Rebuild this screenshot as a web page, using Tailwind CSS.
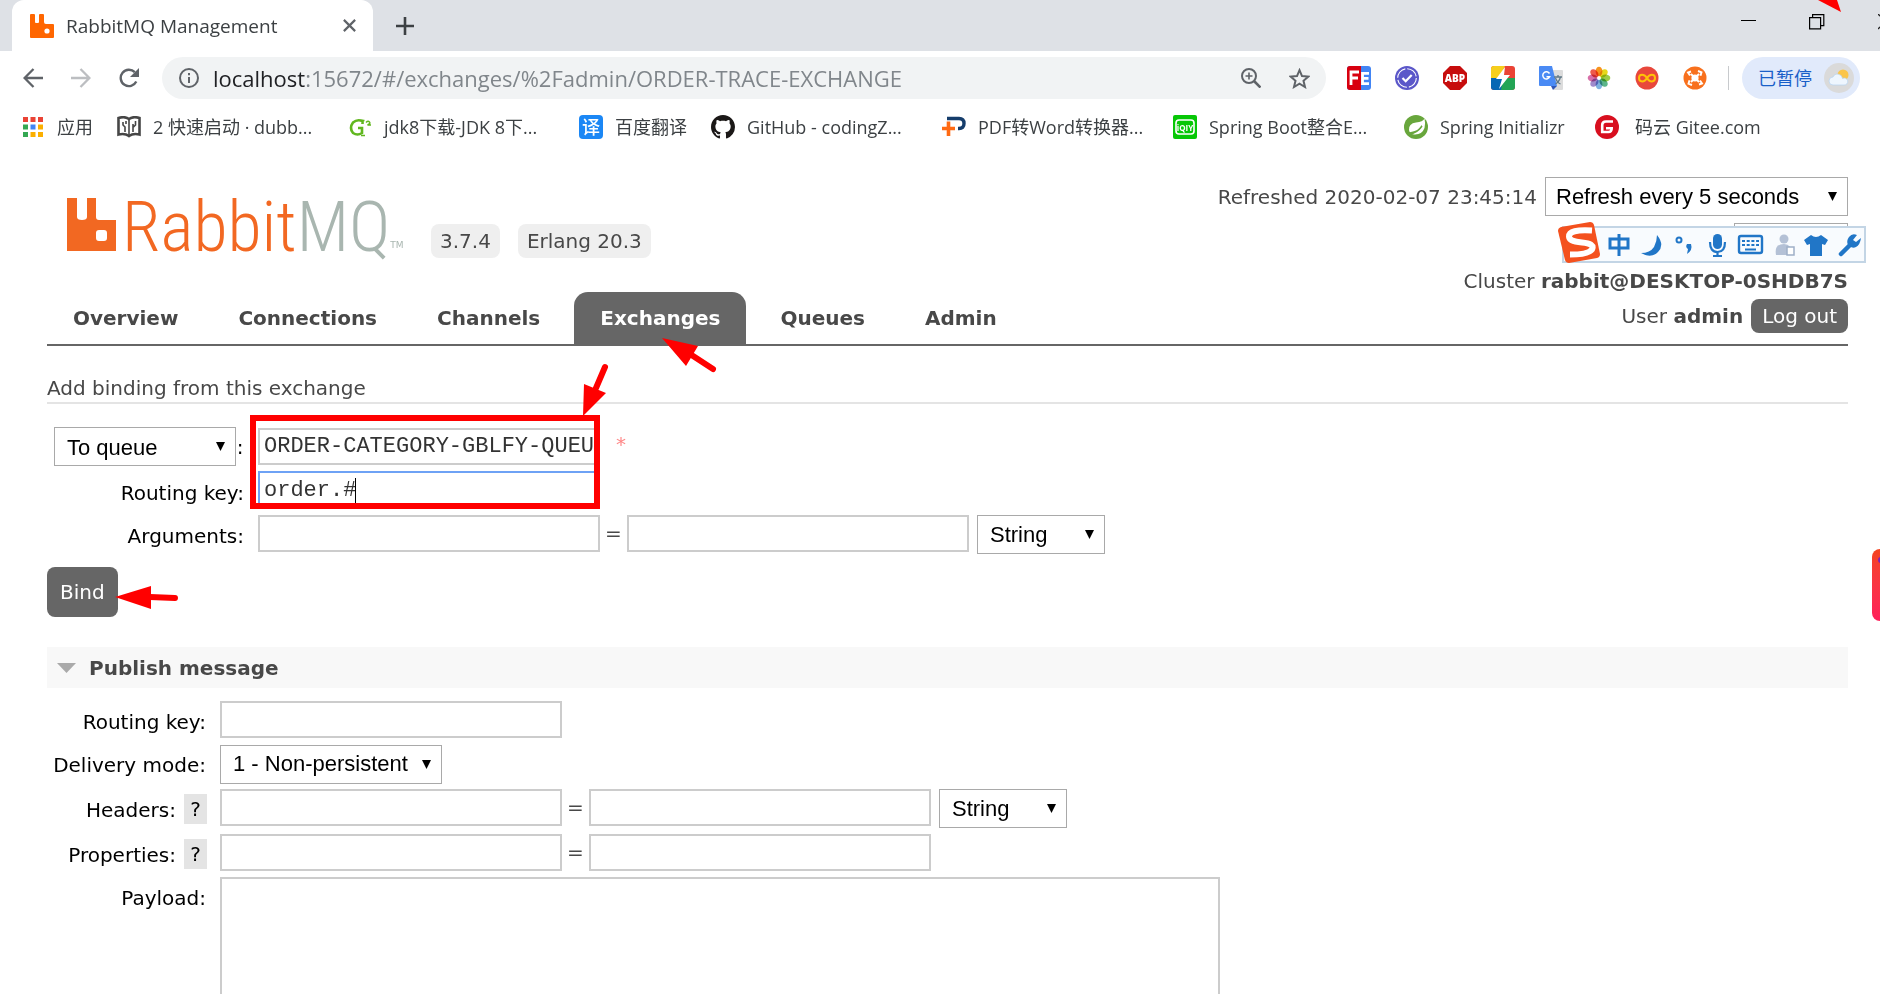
<!DOCTYPE html>
<html lang="zh-CN">
<head>
<meta charset="utf-8">
<title>RabbitMQ Management</title>
<script src="https://cdn.jsdelivr.net/npm/@tailwindcss/browser@4"></script>
</head>
<body class="relative h-screen overflow-hidden bg-white font-['DejaVu_Sans',sans-serif] text-[20px] leading-6 text-[#484848]">

<!-- Browser chrome -->
<header class="font-['Open_Sans','Noto_Sans_CJK_SC',sans-serif] text-[#3c4043]">
  <div class="flex h-[51px] items-stretch bg-[#dee1e6] pl-3">
    <div class="flex w-[361px] items-center gap-3 rounded-t-xl bg-white pr-3.5 pl-[18px]">
      <svg class="size-6" viewBox="0 0 24 24"><path fill="#ff6600" d="M1 0h3q1 0 1 1v7q0 1 1 1h2q1 0 1-1V1q0-1 1-1h3q1 0 1 1v7q0 2 2 2h7q1 0 1 1v12q0 1-1 1H1q-1 0-1-1V1q0-1 1-1z"/><circle cx="17" cy="17" r="2.600" fill="#fff"/></svg>
      <span class="flex-1 whitespace-nowrap text-[19px]">RabbitMQ Management</span>
      <button aria-label="Close tab" class="grid size-5 place-items-center"><svg class="size-[13px]" viewBox="0 0 12 12" stroke="#5f6368" stroke-width="2"><path d="M.8.8l10.400 10.400M11.200.8L.8 11.200"/></svg></button>
    </div>
    <button aria-label="New tab" class="ml-[23px] grid w-[18px] place-items-center"><svg class="size-[18px]" viewBox="0 0 18 18" stroke="#3c4043" stroke-width="2.600"><path d="M9 0v18M0 9h18"/></svg></button>
    <div class="ml-auto flex shrink-0 items-start pt-3.5">
      <button aria-label="Minimize" class="mr-[53px]"><svg class="h-4 w-[15px]" viewBox="0 0 15 16"><path d="M0 6h15v1H0z" fill="#000"/></svg></button>
      <button aria-label="Restore" class="mr-[53px]"><svg class="size-4" viewBox="0 0 16 16" fill="none" stroke="#000" stroke-width="1.200"><path d="M.6 3.600h11v11.200H.6zM3.600 3.600V.6h11.200v11h-3"/></svg></button>
      <button aria-label="Close" class="w-0.5 overflow-hidden"><svg class="size-4" viewBox="0 0 16 16" stroke="#222" stroke-width="1.400"><path d="M0 0l16 15M16 0L0 15"/></svg></button>
    </div>
  </div>

  <div class="flex h-[54px] items-center pr-5 pl-[23px]">
    <button aria-label="Back" class="mr-7"><svg class="size-5" viewBox="0 0 20 20" fill="none" stroke="#5f6368" stroke-width="2.300"><path d="M20 10H2M10.500 1L1.600 10l8.900 9"/></svg></button>
    <button aria-label="Forward" class="mr-7"><svg class="size-5" viewBox="0 0 20 20" fill="none" stroke="#bcbec1" stroke-width="2.300"><path d="M0 10h18M9.500 1l8.900 9-8.900 9"/></svg></button>
    <button aria-label="Reload" class="mr-[23px]"><svg class="size-5" viewBox="0 0 20 20"><path d="M17.300 13.500a8.200 8.200 0 1 1-1.500-9.300" fill="none" stroke="#5f6368" stroke-width="2.400"/><path d="M20 0v9h-9z" fill="#5f6368"/></svg></button>
    <div class="flex h-[42px] flex-1 items-center rounded-full bg-[#f1f3f4] pr-4 pl-[17px]">
      <svg class="size-5 shrink-0" viewBox="0 0 20 20"><circle cx="10" cy="10" r="9" fill="none" stroke="#5f6368" stroke-width="2"/><path d="M9 9h2v6H9zM9 5h2v2.200H9z" fill="#5f6368"/></svg>
      <span class="ml-3.5 flex-1 whitespace-nowrap text-[22px] text-[#80868b]"><span class="text-[#202124]">localhost</span>:15672/#/exchanges/%2Fadmin/ORDER-TRACE-EXCHANGE</span>
      <button aria-label="Zoom" class="mr-7"><svg class="size-5" viewBox="0 0 20 20" fill="none" stroke="#5f6368" stroke-width="2"><circle cx="8" cy="8" r="7"/><path d="M13 13l6.500 6.500" stroke-width="2.600"/><path d="M8 4.500v7M4.500 8h7" stroke-width="1.600"/></svg></button>
      <button aria-label="Bookmark"><svg class="size-[21px]" viewBox="0 0 21 21" fill="none" stroke="#5f6368" stroke-width="2"><path d="M10.500 2.200l2.500 5.900 6.300.5-4.800 4.200 1.500 6.200-5.500-3.300L5 19l1.500-6.200-4.800-4.200 6.300-.5z"/></svg></button>
    </div>
    <div class="flex items-center gap-6 pl-[21px]">
      <button aria-label="FE Helper"><svg class="size-6" viewBox="0 0 24 24"><rect width="24" height="24" rx="3" fill="#4285f4"/><path d="M3 0h11v24H3q-3 0-3-3V3q0-3 3-3z" fill="#d8000f"/><path d="M4 19V6h8M4 12h7M22 7.300h-6.500v10.400H22M16 12.400h5.500" fill="none" stroke="#fff" stroke-width="2.800"/></svg></button>
      <button aria-label="Check"><svg class="size-6" viewBox="0 0 24 24" fill="none"><circle cx="12" cy="12" r="12" fill="#5b57c9"/><circle cx="12" cy="12" r="9.300" stroke="#fff" stroke-width="1.100" stroke-dasharray="12.600 2"/><path d="M7.500 12l3.200 3.200 6-6.200" stroke="#fff" stroke-width="2.200"/></svg></button>
      <button aria-label="AdBlock Plus"><svg class="size-6" viewBox="0 0 24 24"><path d="M7 0h10l7 7v10l-7 7H7l-7-7V7z" fill="#c70d0d"/><text x="12" y="16" text-anchor="middle" font-family="Open Sans" font-weight="800" font-size="10" fill="#fff">ABP</text></svg></button>
      <button aria-label="Speed"><svg class="size-6" viewBox="0 0 24 24"><rect width="24" height="24" rx="3" fill="#ea4335"/><path d="M3 0h11L8 13H0V3q0-3 3-3z" fill="#f6cf1c"/><path d="M0 12h12v12H3q-3 0-3-3z" fill="#0868b4"/><path d="M12 12h12v9q0 3-3 3H10z" fill="#23a455"/><path d="M14 1L5 13h6L8 23l11-14h-6z" fill="#fff"/></svg></button>
      <button aria-label="Translate"><svg class="size-6" viewBox="0 0 24 24"><path d="M9 4h14q1 0 1 1v18q0 1-1 1h-8z" fill="#dcdcdc"/><path d="M1 0h12l5 20H1q-1 0-1-1V1q0-1 1-1z" fill="#4a8af4"/><path d="M12 20h6l-4 4z" fill="#2f56b5"/><path d="M10.500 7.500a3.600 3.600 0 1 0 .2 3.300H7.500" fill="none" stroke="#fff" stroke-width="1.500"/><path d="M15 11h8M19 9v2M21.500 11q-1.500 5-5 7M16.500 12q2 5 5 6" fill="none" stroke="#607988" stroke-width="1.300"/></svg></button>
      <button aria-label="Photos"><svg class="size-6" viewBox="0 0 24 24"><g transform="translate(12 12)" class="*:mix-blend-multiply"><ellipse cy="-6.500" rx="3.400" ry="4.800" fill="#f7931e"/><ellipse cy="-6.500" rx="3.400" ry="4.800" fill="#e6d81b" transform="rotate(45)"/><ellipse cy="-6.500" rx="3.400" ry="4.800" fill="#9ccc46" transform="rotate(90)"/><ellipse cy="-6.500" rx="3.400" ry="4.800" fill="#5cb58a" transform="rotate(135)"/><ellipse cy="-6.500" rx="3.400" ry="4.800" fill="#7fb2e0" transform="rotate(180)"/><ellipse cy="-6.500" rx="3.400" ry="4.800" fill="#a08bcb" transform="rotate(225)"/><ellipse cy="-6.500" rx="3.400" ry="4.800" fill="#d76fa8" transform="rotate(270)"/><ellipse cy="-6.500" rx="3.400" ry="4.800" fill="#ee5a4c" transform="rotate(315)"/></g></svg></button>
      <button aria-label="Infinity"><svg class="size-6" viewBox="0 0 24 24"><circle cx="12" cy="12" r="11.500" fill="#e8473c"/><path d="M12 12c-2.500-4.500-8-4.500-8 0s5.500 4.500 8 0 8-4.500 8 0-5.500 4.500-8 0z" fill="none" stroke="#ffc107" stroke-width="2"/></svg></button>
      <button aria-label="Crosshair"><svg class="size-6" viewBox="0 0 24 24"><circle cx="12" cy="12" r="11.500" fill="#f8701d"/><circle cx="12" cy="12" r="3.600" fill="#fff"/><path d="M7 9.500L5 6.500l3-1M15 5l3.500 1.300-1 3.500M17 14.500l2 3-3 1M9 19l-3.500-1.300 1-3.500M8 8l3 3M16 8l-3 3M16 16l-3-3M8 16l3-3" fill="none" stroke="#fff" stroke-width="1.900"/></svg></button>
    </div>
    <div class="mr-[13px] ml-[21px] h-6 w-px bg-[#c8cacd]"></div>
    <button class="flex h-[42px] w-[118px] items-center gap-3 rounded-full bg-[#e1eafb] pl-4 text-[18px] text-[#1a5fc8]">已暂停
      <svg class="size-[30px]" viewBox="0 0 30 30"><circle cx="15" cy="15" r="15" fill="#dadada"/><circle cx="19" cy="12" r="5.500" fill="#fbc54a"/><path d="M9 22a4 4 0 0 1 0-8 5 5 0 0 1 9.500 1.500A3.500 3.500 0 1 1 20 22z" fill="#eef6fe" stroke="#b5d3f0" stroke-width=".7"/></svg>
    </button>
  </div>

  <nav class="flex h-[43px] items-center pl-[23px] text-[18px] whitespace-nowrap">
    <a href="#" class="flex w-[94px] items-center gap-3.5"><svg class="size-5" viewBox="0 0 20 20"><path d="M0 0h5v5H0zM7.500 0h5v5h-5zM15 0h5v5h-5z" fill="#ea4335"/><path d="M0 7.500h5v5H0zM0 15h5v5H0z" fill="#34a853"/><path d="M7.500 7.500h5v5h-5z" fill="#4285f4"/><path d="M15 7.500h5v5h-5zM7.500 15h5v5h-5zM15 15h5v5h-5z" fill="#fbaf00"/></svg>应用</a>
    <a href="#" class="flex w-[232px] items-center gap-3"><svg class="h-[22px] w-6" viewBox="0 0 24 22" fill="none"><path d="M1.500 2Q8 0 12 3q4-3 10.500-1v16.500Q16 17 12 20q-4-3-10.500-1.500z" stroke="#464646" stroke-width="2.600"/><path d="M12 3v16M6 6v3l2 2v5M9 5v3M16 16V8M18.500 5v4l-2 2" stroke="#464646" stroke-width="1.600"/></svg>2 快速启动 · dubb...</a>
    <a href="#" class="flex w-[230px] items-center gap-3"><svg class="size-[23px]" viewBox="0 0 23 23" fill="none" stroke="#61b71f"><path d="M13.500 9V6Q8 4 4 7.500q-4 5.500 0 10.500 4.500 3 9 0v-5H9" stroke-width="2.600"/><path d="M12 20.500h4M11 5.500h4.500" stroke-width="1.600"/><path d="M17 7.500q2-2 3.500-.5t-2 3h3.500" stroke-width="1.400"/></svg>jdk8下载-JDK 8下...</a>
    <a href="#" class="flex w-[132px] items-center gap-3"><span class="grid size-6 place-items-center rounded bg-[#1b87f5] leading-6 font-medium text-white">译</span>百度翻译</a>
    <a href="#" class="flex w-[231px] items-center gap-3"><svg class="size-6" viewBox="0 0 16 16"><path fill="#1b1817" d="M8 0C3.580 0 0 3.580 0 8c0 3.540 2.290 6.530 5.470 7.590.4.070.55-.17.55-.38 0-.19-.01-.82-.01-1.490-2.010.37-2.530-.49-2.690-.94-.09-.23-.48-.94-.82-1.130-.28-.15-.68-.52-.01-.53.63-.01 1.080.58 1.230.82.72 1.210 1.870.87 2.330.66.07-.52.28-.87.51-1.070-1.780-.2-3.640-.89-3.640-3.950 0-.87.31-1.590.82-2.150-.08-.2-.36-1.020.08-2.120 0 0 .67-.21 2.200.82.64-.18 1.320-.27 2-.27s1.360.09 2 .27c1.530-1.040 2.200-.82 2.200-.82.44 1.100.16 1.920.08 2.120.51.56.82 1.270.82 2.150 0 3.070-1.870 3.750-3.650 3.950.29.25.54.73.54 1.480 0 1.070-.01 1.930-.01 2.200 0 .21.15.46.55.38A8.010 8.010 0 0 0 16 8c0-4.420-3.580-8-8-8z"/></svg>GitHub - codingZ...</a>
    <a href="#" class="flex w-[231px] items-center gap-3"><svg class="size-6" viewBox="0 0 24 24" fill="none"><path d="M5 3.500h12q5 0 5 5t-5 5h-1" stroke="#153d6b" stroke-width="3.400"/><path d="M0 13.500h13M6.500 6.500V21" stroke="#ff6a13" stroke-width="3.600"/></svg>PDF转Word转换器...</a>
    <a href="#" class="flex w-[231px] items-center gap-3"><svg class="size-6" viewBox="0 0 24 24"><rect width="24" height="24" rx="2" fill="#07c706"/><rect x="3" y="5" width="18" height="14" rx="3" fill="none" stroke="#fff" stroke-width="1.600"/><text x="12" y="15.500" text-anchor="middle" font-family="Open Sans" font-weight="700" font-size="8" fill="#fff">iQIY</text></svg>Spring Boot整合E...</a>
    <a href="#" class="flex w-[191px] items-center gap-3"><svg class="size-6" viewBox="0 0 24 24"><circle cx="12" cy="12" r="12" fill="#68a63c"/><path d="M20.500 3.500Q19 7 12 7.500 4.500 8.500 5 15q.5 4 5 4.500 8 .5 10.500-6.500 1.200-5 0-9.500z" fill="#fff"/><path d="M4 18.500q8 1 14-7.500-4 6-10 6.500z" fill="#68a63c" stroke="#68a63c" stroke-width="1.500"/></svg>Spring Initializr</a>
    <a href="#" class="flex items-center gap-4"><svg class="size-6" viewBox="0 0 24 24"><circle cx="12" cy="12" r="12" fill="#d80f1f"/><path d="M18 6.500h-7Q7.200 6.500 7.200 10.300V17h6.300q3.200 0 3.200-3.800H11" fill="none" stroke="#fff" stroke-width="2.600"/></svg>码云 Gitee.com</a>
  </nav>
</header>

<main class="pt-0.5 pr-8 pl-[47px]">
  <div class="flex items-end justify-between border-b-2 border-[#666]">
    <div>
      <div class="flex items-end pl-5">
        <a href="#" aria-label="RabbitMQ" class="flex w-[364px] items-end pb-[7px]">
          <svg class="h-[53px] w-[49px] shrink-0" viewBox="0 0 49 53"><path fill="#f26822" fill-rule="evenodd" d="M0 0h10v19q0 3 5 3t5-3V0h9v19q0 3 3 3h17v31H0zM32 32q-3 0-3 3v5q0 3 3 3h5q3 0 3-3v-5q0-3-3-3z"/></svg>
          <span class="ml-1.5 font-['Liberation_Sans_Narrow','Roboto_Condensed',Roboto,sans-serif] text-[70px] leading-[48px] font-light text-[#f26822]">Rabbit<span class="text-[#a9b6b0]">MQ</span></span>
          <span class="text-[9px] leading-3 text-[#a9b6b0]">TM</span>
        </a>
        <span class="rounded-lg bg-[#efefef] px-[9px] leading-[34px]">3.7.4</span>
        <span class="ml-[18px] rounded-lg bg-[#efefef] px-[9px] leading-[34px]">Erlang 20.3</span>
      </div>
      <nav class="mt-[34px] flex gap-2 font-bold *:rounded-t-[14px] *:px-[26px] *:leading-[52px]">
        <a href="#">Overview</a><a href="#">Connections</a><a href="#">Channels</a><a href="#" class="bg-[#666] text-white">Exchanges</a><a href="#">Queues</a><a href="#">Admin</a>
      </nav>
    </div>
    <div class="flex flex-col items-end pt-[27px] pb-[11px]">
      <div class="flex items-center gap-2">
        <label for="refresh">Refreshed 2020-02-07 23:45:14</label>
        <div class="relative">
          <select id="refresh" class="h-[39px] w-[303px] appearance-none border border-[#a9a9a9] bg-white pl-2.5 font-['Liberation_Sans',sans-serif] text-[22px] text-black"><option>Refresh every 5 seconds</option></select>
          <svg class="pointer-events-none absolute top-[15px] right-[11px] size-[9px]" viewBox="0 0 9 9"><path d="M0 0h9L4.500 9z"/></svg>
        </div>
      </div>
      <div class="mt-[7px]"><select aria-label="Virtual host" class="h-[39px] w-[114px] appearance-none border border-[#a9a9a9] bg-white"><option></option></select></div>
      <div class="mt-[7px]">Cluster <b>rabbit@DESKTOP-0SHDB7S</b></div>
      <div class="mt-1.5 flex items-center gap-2"><span>User <b>admin</b></span><button class="rounded-lg bg-[#666] px-[11px] leading-[34px] text-white">Log out</button></div>
    </div>
  </div>

  <section>
    <h3 class="mt-[30px] border-b-2 border-[#e4e4e4] pb-0.5">Add binding from this exchange</h3>
    <form class="mt-[23px]">
      <div class="flex flex-col gap-1.5 text-black">
        <div class="flex h-[38px]">
          <div class="flex w-[197px] justify-end leading-10">
            <div class="relative">
              <select id="dest" aria-label="Destination type" class="h-[39px] w-[182px] appearance-none border border-[#a9a9a9] bg-white pb-0.5 pl-3 font-['Liberation_Sans',sans-serif] text-[22px] text-black"><option>To queue</option></select>
              <svg class="pointer-events-none absolute top-[15px] right-[11px] size-[9px]" viewBox="0 0 9 9"><path d="M0 0h9L4.500 9z"/></svg>
            </div><label for="dest-name" class="w-2 text-center">:</label>
          </div>
          <input id="dest-name" value="ORDER-CATEGORY-GBLFY-QUEUE" class="mt-px ml-3.5 h-[37px] w-[342px] border-2 border-[#ccc] px-1 font-['Liberation_Mono',monospace] text-[22px] text-[#333]">
          <span class="ml-4 leading-[34px] text-[#f88]">*</span>
        </div>
        <div class="flex h-[38px]">
          <label for="rk" class="w-[197px] text-right leading-[44px]">Routing key:</label>
          <div class="relative ml-3.5">
            <input id="rk" value="order.#" class="h-[38px] w-[342px] border-2 border-[#6ea2f5] px-1 font-['Liberation_Mono',monospace] text-[22px] text-[#333] outline-none">
            <span class="absolute top-[7px] left-[97px] h-[25px] w-px bg-black"></span>
          </div>
        </div>
        <div class="flex h-[38px]">
          <label for="arg" class="w-[197px] text-right leading-[42px]">Arguments:</label>
          <input id="arg" class="ml-3.5 h-[37px] w-[342px] border-2 border-[#ccc] px-1">
          <span class="w-[27px] text-center leading-[36px] text-[#484848]">=</span>
          <input aria-label="Argument value" class="h-[37px] w-[342px] border-2 border-[#ccc] px-1">
          <div class="relative ml-2">
            <select aria-label="Argument type" class="h-[39px] w-[128px] appearance-none border border-[#a9a9a9] bg-white pl-3 font-['Liberation_Sans',sans-serif] text-[22px] text-black"><option>String</option></select>
            <svg class="pointer-events-none absolute top-[15px] right-[11px] size-[9px]" viewBox="0 0 9 9"><path d="M0 0h9L4.500 9z"/></svg>
          </div>
        </div>
      </div>
      <button type="button" class="mt-3.5 block rounded-lg bg-[#666] px-[13px] leading-[50px] text-white">Bind</button>
    </form>
  </section>

  <section>
    <h2 class="mt-[30px] flex h-[41px] items-center gap-[13px] bg-[#f8f8f8] pl-2.5 font-bold"><svg class="h-2.5 w-[19px]" viewBox="0 0 19 10"><path d="M0 0h19l-9.500 10z" fill="#aaa"/></svg>Publish message</h2>
    <form class="mt-[13px] flex flex-col gap-1.5 text-black">
      <div class="flex h-[38px]">
        <label for="prk" class="w-[159px] text-right leading-[42px]">Routing key:</label>
        <input id="prk" class="ml-3.5 h-[37px] w-[342px] border-2 border-[#ccc] px-1">
      </div>
      <div class="flex h-[38px]">
        <label for="mode" class="w-[159px] text-right leading-10">Delivery mode:</label>
        <div class="relative ml-3.5">
          <select id="mode" class="h-[39px] w-[222px] appearance-none border border-[#a9a9a9] bg-white pb-0.5 pl-3 font-['Liberation_Sans',sans-serif] text-[22px] text-black"><option>1 - Non-persistent</option></select>
          <svg class="pointer-events-none absolute top-[15px] right-[11px] size-[9px]" viewBox="0 0 9 9"><path d="M0 0h9L4.500 9z"/></svg>
        </div>
      </div>
      <div class="flex h-[39px]">
        <div class="flex w-[160px] justify-end gap-2"><label for="hdr" class="leading-[42px]">Headers:</label><button type="button" class="mt-[5px] h-[30px] w-[23px] bg-[#e4e4e4]">?</button></div>
        <input id="hdr" class="ml-[13px] h-[37px] w-[342px] border-2 border-[#ccc] px-1">
        <span class="w-[27px] text-center leading-[36px] text-[#484848]">=</span>
        <input aria-label="Header value" class="h-[37px] w-[342px] border-2 border-[#ccc] px-1">
        <div class="relative ml-2">
          <select aria-label="Header type" class="h-[39px] w-[128px] appearance-none border border-[#a9a9a9] bg-white pl-3 font-['Liberation_Sans',sans-serif] text-[22px] text-black"><option>String</option></select>
          <svg class="pointer-events-none absolute top-[15px] right-[11px] size-[9px]" viewBox="0 0 9 9"><path d="M0 0h9L4.500 9z"/></svg>
        </div>
      </div>
      <div class="flex h-[37px]">
        <div class="flex w-[160px] justify-end gap-2"><label for="prop" class="leading-[42px]">Properties:</label><button type="button" class="mt-[5px] h-[30px] w-[23px] bg-[#e4e4e4]">?</button></div>
        <input id="prop" class="ml-[13px] h-[37px] w-[342px] border-2 border-[#ccc] px-1">
        <span class="w-[27px] text-center leading-[36px] text-[#484848]">=</span>
        <input aria-label="Property value" class="h-[37px] w-[342px] border-2 border-[#ccc] px-1">
      </div>
      <div class="flex">
        <label for="payload" class="w-[159px] text-right leading-[42px]">Payload:</label>
        <textarea id="payload" rows="8" class="ml-3.5 w-[1000px] resize-none border-2 border-[#ccc] p-1"></textarea>
      </div>
    </form>
  </section>
</main>

<!-- Input method toolbar floating over the page -->
<div class="absolute top-[222px] right-3.5 flex h-[41px] w-[308px] items-center">
  <div class="absolute inset-x-0 top-1 left-1 h-[37px] border-2 border-[#c3d5e5] bg-[#f8fbfe]"></div>
  <svg class="absolute inset-0 h-[41px] w-[308px]" viewBox="0 0 308 41" fill="none">
    <path d="M3 5L32 0q3 0 4 3l6 29q0 3-3 4L11 41q-3 0-4-3L0 9q0-3 3-4z" fill="#f4511e"/>
    <path d="M34 8.500Q11 7 11 14.500q0 5 13 6t10 7q-4 5-22 5" stroke="#fff" stroke-width="6"/>
    <g stroke="#2176c7" stroke-width="3"><path d="M52 17h18v9H52zM61 12v22"/></g>
    <path d="M99 13q8 10 1 17t-17 1q9 0 13-6 3-6 3-12z" fill="#2176c7"/>
    <circle cx="121" cy="18" r="2.500" stroke="#2176c7" stroke-width="2"/><path d="M129 22h4q2 6-4 10l1-5q-3-2-1-5z" fill="#2176c7"/>
    <rect x="155" y="12" width="9" height="15" rx="4.500" fill="#2176c7"/><path d="M152 20q0 10 7.500 10t7.500-10M159.500 30v4M155 34h9" stroke="#2176c7" stroke-width="2.200"/>
    <rect x="181" y="14" width="23" height="17" rx="2" stroke="#2176c7" stroke-width="2.400"/><path d="M184 19h17M184 23h17" stroke="#2176c7" stroke-width="2" stroke-dasharray="3 1.700"/><path d="M187 27.500h11" stroke="#2176c7" stroke-width="2"/>
    <circle cx="226" cy="17" r="4.500" fill="#b4c1d6"/><path d="M218 33q-2-11 8-11 8 0 8 11z" fill="#b4c1d6"/><path d="M229 25h7v8h-7z" fill="#fff" stroke="#9fb0c8" stroke-width="1.500"/>
    <path d="M253 13q5 4 10 0l7 5-3 5-3-1v12h-12V22l-3 1-3-5z" fill="#2176c7"/>
    <path d="M283 32l11-11" stroke="#2176c7" stroke-width="4.500" stroke-linecap="round"/><path d="M299 13q-5-2-8 2t-1 8q4 4 8 2t5-9l-5 4-3-2z" fill="#2176c7"/>
  </svg>
</div>

<!-- Side widget at the window edge -->
<div class="absolute top-[549px] right-0 h-[72px] w-2 overflow-hidden rounded-l-lg bg-linear-to-b from-[#f4431f] to-[#ff1f5a]"><div class="ml-1.5 mt-2 h-1.5 w-1 rounded-l-full bg-[#7a1fc0]"></div></div>

<!-- Red annotations -->
<div class="pointer-events-none absolute top-[415px] left-[250px] h-[94px] w-[350px] border-6 border-[#f00]"></div>
<svg class="pointer-events-none absolute top-0 left-0 h-[620px] w-[760px]" viewBox="0 0 760 620" fill="#f00" stroke="#f00" stroke-linecap="round">
  <g stroke="none"><path d="M662 338l36 8-12 20zM583 416l1-32 22 9zM115 597l36-11v23z"/></g>
  <path d="M690 354l23 15M596 388l9-21M150 597l25 1" stroke-width="6"/>
</svg>
<svg class="pointer-events-none absolute top-0 right-[39px] h-3 w-[23px]" viewBox="0 0 23 12"><path d="M0 0h19l4 12z" fill="#f00"/></svg>
</body>
</html>
